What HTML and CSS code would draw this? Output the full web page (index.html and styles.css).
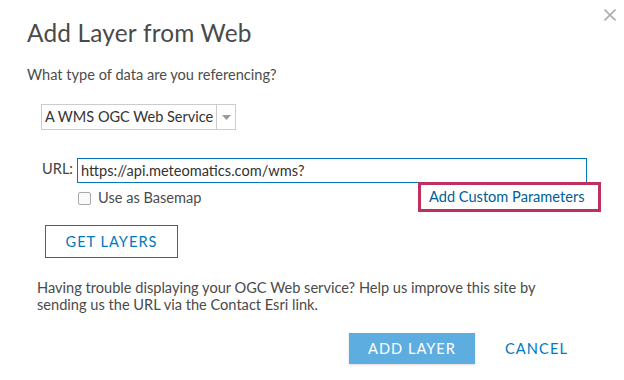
FILE: index.html
```html
<!DOCTYPE html>
<html>
<head>
<meta charset="utf-8">
<link rel="stylesheet" href="styles.css">
</head>
<body>
<div class="dialog">
  <button class="close" aria-label="Close">
    <svg width="12" height="12" viewBox="0 0 12 12"><path d="M0.5 0.5 L11.5 11.5 M11.5 0.5 L0.5 11.5" stroke="#adadad" stroke-width="1.6" fill="none"/></svg>
  </button>
  <h1 class="title">Add Layer from Web</h1>
  <p class="question">What type of data are you referencing?</p>
  <div class="select">
    <span class="select-text">A WMS OGC Web Service</span>
    <span class="select-arrow"><svg width="9" height="5" viewBox="0 0 9 5"><path d="M0 0 H9 L4.5 5 Z" fill="#999"/></svg></span>
  </div>
  <div class="url-row">
    <label class="url-label">URL:</label>
    <div class="url-col">
      <div class="url-input">https://api.meteomatics.com/wms?</div>
      <div class="under-row">
        <label class="check"><span class="box"></span>Use as Basemap</label>
        <a class="custom">Add Custom Parameters</a>
      </div>
    </div>
  </div>
  <button class="get-layers">GET LAYERS</button>
  <p class="help">Having trouble displaying your OGC Web service? Help us improve this site by sending us the URL via the Contact Esri link.</p>
  <div class="actions">
    <button class="add">ADD LAYER</button>
    <button class="cancel">CANCEL</button>
  </div>
</div>
</body>
</html>
```
FILE: styles.css
```css
* { box-sizing: border-box; }
html, body { margin: 0; padding: 0; background: #fff; }
body { font-family: Lato, "Open Sans", sans-serif; color: #4c4c4c; width: 624px; height: 380px; overflow: hidden; }
.dialog { position: relative; padding: 16px 0 0 27px; }
.close { position: absolute; top: 9px; right: 8px; border: 0; background: none; padding: 0; width: 12px; height: 12px; }
.close svg { display: block; }
.title { margin: 0; font-size: 24.4px; font-weight: 400; line-height: 34px; color: #4a4a4a; letter-spacing: 0.2px; }
.question { margin: 16px 0 0; font-size: 14.6px; line-height: 18px; }
.select { margin: 20px 0 0 14px; width: 195px; height: 26px; border: 1px solid #ccc; display: flex; align-items: stretch; }
.select-text { flex: 1; font-size: 14.5px; line-height: 24px; padding-left: 3px; color: #333; white-space: nowrap; }
.select-arrow { width: 19px; border-left: 1px solid #ccc; display: flex; align-items: center; justify-content: center; }
.select-arrow svg { display: block; }
.url-row { display: flex; margin: 28px 0 0 15px; }
.url-label { font-size: 14.6px; line-height: 20px; width: 35px; margin-top: 1px; color: #444; }
.url-col { width: 510px; }
.url-input { height: 25px; border: 1px solid #0079c1; font-size: 14.6px; line-height: 23px; padding-left: 3px; color: #333; }
.under-row { display: flex; justify-content: space-between; align-items: flex-start; }
.check { display: flex; align-items: center; font-size: 14.6px; margin: 7px 0 0 1px; line-height: 16px; }
.box { width: 13px; height: 13px; border: 1px solid #aaa; border-radius: 2px; margin-right: 7px; background: #fafafa; }
.custom { border: 3px solid #c0305e; margin: -1px -14px 0 0; width: 183px; height: 30px; font-size: 14.6px; line-height: 24px; padding-left: 8px; color: #005e95; text-decoration: none; }
.get-layers { display: block; margin: 13px 0 0 18px; width: 133px; height: 33px; border: 1px solid #0079c1; background: #fff; color: #0079c1; font-family: inherit; font-size: 14.6px; letter-spacing: 1px; padding: 0; }
.help { margin: 21px 0 0 10px; font-size: 14.6px; line-height: 17px; width: 540px; color: #4a4a4a; }
.actions { display: flex; margin: 20px 0 0 322px; align-items: center; }
.add { width: 126px; height: 31px; background: #5dade0; color: #fff; border: 0; font-family: inherit; font-size: 14.6px; letter-spacing: 1px; box-shadow: 0 1px 2px rgba(0,0,0,0.15); }
.cancel { margin-left: 30px; border: 0; background: none; color: #0079c1; font-family: inherit; font-size: 14.6px; letter-spacing: 1.1px; padding: 0; }
```
